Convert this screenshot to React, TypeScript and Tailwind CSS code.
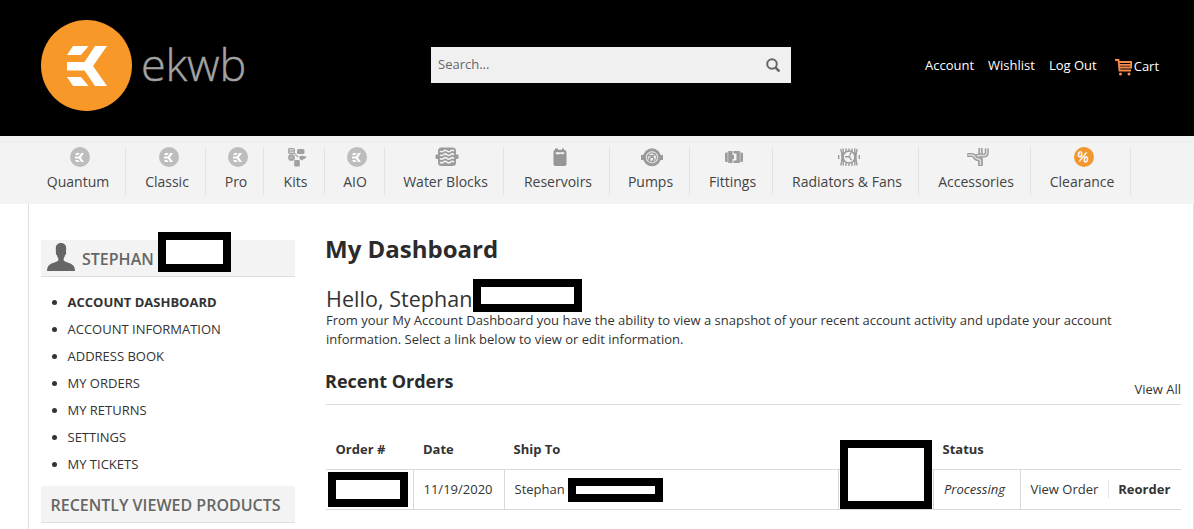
import type { ReactNode } from "react";

function EkMark({ className }: { className?: string }) {
  return (
    <svg viewBox="0 0 40 40" className={className} fill="currentColor">
      <path d="M6 0h15.500l-7.500 9H0z" />
      <path d="M28 0H40L26 20l14 20H28L17.500 24.500H0v-8.500h17.500z" />
      <path d="M0 31h14l7.500 9H6z" />
    </svg>
  );
}

function EkIcon() {
  return (
    <span className="flex size-5 items-center justify-center rounded-full bg-[#bdbdbd] text-white">
      <EkMark className="size-[9px]" />
    </span>
  );
}

function KitsIcon() {
  return (
    <svg viewBox="0 0 20 20" className="size-5" fill="#a0a0a0">
      <rect x="1.700" y="1.500" width="5.600" height="5" rx="1" fill="#d5d5d5" stroke="#a0a0a0" strokeWidth="1.200" />
      <path d="M2 4h5" stroke="#a0a0a0" />
      <rect x="10" y="2" width="7.500" height="5" rx="1.500" />
      <path d="M7 6l4 4" stroke="#b0b0b0" strokeWidth="1.500" />
      <circle cx="4.500" cy="10.500" r="2.600" fill="#b4b4b4" stroke="#a0a0a0" strokeWidth="1.500" />
      <path d="M12 9.500l3.500-1 1.500 1 2.500-.5-1 2.500-2 .5-1 1.500-2.500-1z" />
      <rect x="7.200" y="13" width="5.600" height="6.500" rx="1" />
    </svg>
  );
}

function BlockIcon() {
  return (
    <svg viewBox="0 0 24 20" className="h-5 w-6" fill="#9b9b9b">
      <rect x="0.500" y="7.500" width="23" height="4.500" rx="1" />
      <rect x="3" y="0.500" width="18" height="18.500" rx="3.500" />
      <g fill="none" stroke="#f3f3f3" strokeWidth="1.500">
        <path d="M5 4q1.750 1.600 3.500 0t3.500 0 3.500 0 3.500 0" />
        <path d="M5 7.700q1.750 1.600 3.500 0t3.500 0 3.500 0 3.500 0" />
        <path d="M5 11.400q1.750 1.600 3.500 0t3.500 0 3.500 0 3.500 0" />
        <path d="M5 15.100q1.750 1.600 3.500 0t3.500 0 3.500 0 3.500 0" />
      </g>
    </svg>
  );
}

function ReservoirIcon() {
  return (
    <svg viewBox="0 0 14 20" className="h-5 w-3.5" fill="#969696">
      <path d="M2 1.500h3v1.300h4V1.500h2v1.300q2.500.2 2.500 2.700v11.500q0 2-2 2h-9q-2 0-2-2V5q0-2 1.500-2.200z" />
      <path d="M2.500 5.200h9q0 2.500-2.500 2-2-.8-3.500.2-3 .6-3-2.200z" fill="#f3f3f3" />
    </svg>
  );
}

function PumpIcon() {
  return (
    <svg viewBox="0 0 22 20" className="h-5 w-[22px]">
      <path d="M0 8h3v5H0zM19 8h3v5h-3z" fill="#9b9b9b" />
      <circle cx="11" cy="10.300" r="7.500" fill="#f3f3f3" stroke="#9b9b9b" strokeWidth="3" />
      <circle cx="11" cy="10.300" r="4.500" fill="none" stroke="#9b9b9b" strokeWidth="1.200" />
      <path d="M6.500 8.500l5 .3 3.500-2M11.500 9l-3 2.500.7 3.500M11.500 9l1.500 3-2 3" fill="none" stroke="#9b9b9b" strokeWidth="1.400" />
    </svg>
  );
}

function FittingIcon() {
  return (
    <svg viewBox="0 0 18 20" className="h-5 w-[18px]" fill="#9b9b9b">
      <path d="M1 5.500h1.700v9.500H1l-1-1V6.500zM3.200 4h4.300v4H9v4H7.500v4H3.200zM8.500 4h6.300v12H8.500v-2.500h3v-7h-3zM15.300 5.500h1.700l1 1v7.500l-1 1h-1.700z" />
    </svg>
  );
}

function RadiatorIcon() {
  return (
    <svg viewBox="0 0 22 20" className="h-5 w-[22px]" fill="none" stroke="#9b9b9b" strokeWidth="1.400">
      <path d="M.7 8v4M2.800 2q2.500 8 0 16.500M5.200 1.500v17M8 1.500v4M11 1.500v3M14 1.500v4M8 15v4M11 16v3M14 15v4M16.800 1.500v17M19.200 2q-2.500 8 0 16.500M21.300 8v4" />
      <circle cx="11" cy="10" r="6" fill="#f3f3f3" strokeWidth="1.600" />
      <path d="M7 9.700h3M12 8l1-2.500M12 11.300l1.500 1.700" />
      <circle cx="11.300" cy="9.700" r=".6" />
    </svg>
  );
}

function TubesIcon() {
  return (
    <svg viewBox="0 0 22 20" className="h-5 w-[22px]" fill="none">
      <path d="M13.500 1v17.500" stroke="#9b9b9b" strokeWidth="4.400" />
      <path d="M13.500 1v17.500" stroke="#e0e0e0" strokeWidth="1.400" />
      <path d="M19.800 1.500v4q0 3-3 3h-4.500q-3 0-4.500 3" stroke="#9b9b9b" strokeWidth="4" />
      <path d="M19.800 1.500v4q0 3-3 3h-4.500q-3 0-4.500 3" stroke="#e0e0e0" strokeWidth="1.300" />
      <path d="M.3 8H4.500q2.500 0 3.500 2t3 2q2.500 0 2.500 2.700V19" stroke="#9b9b9b" strokeWidth="4.200" />
      <path d="M1.300 8H4.500q2.500 0 3.500 2t3 2q2.500 0 2.500 2.700V18" stroke="#e0e0e0" strokeWidth="1.400" />
    </svg>
  );
}

function SaleIcon() {
  return (
    <span className="flex size-5 items-center justify-center rounded-full bg-[#f0982f] text-sm leading-5 font-semibold text-white">
      <span className="rotate-[10deg]">%</span>
    </span>
  );
}

const navItems: { label: string; width: string; icon: ReactNode }[] = [
  { label: "Quantum", width: "w-[96px] pl-px", icon: <EkIcon /> },
  { label: "Classic", width: "w-[80px] pl-[3px]", icon: <EkIcon /> },
  { label: "Pro", width: "w-[58px] pl-[3px]", icon: <EkIcon /> },
  { label: "Kits", width: "w-[61px] pl-[3px]", icon: <KitsIcon /> },
  { label: "AIO", width: "w-[60px] pl-px", icon: <EkIcon /> },
  { label: "Water Blocks", width: "w-[119px] pl-[3px]", icon: <BlockIcon /> },
  { label: "Reservoirs", width: "w-[106px] pl-[3px]", icon: <ReservoirIcon /> },
  { label: "Pumps", width: "w-[80px] pl-[2px]", icon: <PumpIcon /> },
  { label: "Fittings", width: "w-[83px] pl-[3px]", icon: <FittingIcon /> },
  { label: "Radiators & Fans", width: "w-[146px] pl-[3px]", icon: <RadiatorIcon /> },
  { label: "Accessories", width: "w-[112px] pl-[3px]", icon: <TubesIcon /> },
  { label: "Clearance", width: "w-[100px] pl-[3px]", icon: <SaleIcon /> },
];

const accountLinks = [
  "Account Dashboard",
  "Account Information",
  "Address Book",
  "My Orders",
  "My Returns",
  "Settings",
  "My Tickets",
];

function Header() {
  return (
    <header className="flex h-[136px] bg-black pl-[41px]">
      <div className="mt-5 flex h-[91px] w-[390px] items-center">
        <div className="flex size-[91px] items-center justify-center rounded-full bg-[#f89828] text-white">
          <EkMark className="size-10" />
        </div>
        <span className="mb-[3px] ml-[9px] text-[45px] leading-[60px] font-light tracking-[-0.2px] text-[#a3a3a3] [-webkit-text-stroke:0.4px_#a3a3a3]">
          ekwb
        </span>
      </div>
      <div className="mt-[47px] flex h-9 w-[360px] items-center justify-between bg-[#f0f0f0] pr-[11px] pl-[7px]">
        <span className="text-[13px] text-[#666]">Search...</span>
        <svg viewBox="0 0 14 14" className="size-3.5" fill="none" stroke="#666" strokeWidth="2">
          <circle cx="6" cy="6" r="4.800" />
          <path d="M9.500 9.500l4 4" strokeWidth="2.500" />
        </svg>
      </div>
      <div className="mt-14 ml-[134px] flex h-5 items-center gap-3.5 text-[13px] whitespace-nowrap text-white">
        <a>Account</a>
        <a>Wishlist</a>
        <a>Log Out</a>
        <a className="ml-1 flex items-center pt-0.5">
          <svg viewBox="0 0 17 17" className="mr-0.5 size-[17px]" fill="none" stroke="#f58b4c" strokeWidth="1.800">
            <path d="M0 1h3.500l1 10.500h11.500M3.700 3h12.500v5.500H4.300M4 5.800h12" />
            <circle cx="5.500" cy="15" r="1.500" fill="#f58b4c" stroke="none" />
            <circle cx="14" cy="15" r="1.500" fill="#f58b4c" stroke="none" />
          </svg>
          Cart
        </a>
      </div>
    </header>
  );
}

function Nav() {
  return (
    <nav className="h-[68px] bg-[#f3f3f3]">
      <div className="h-[6px] border-b border-[#ededed]" />
      <ul className="flex pt-[5px] pl-[30px]">
        {navItems.map((item) => (
          <li
            key={item.label}
            className={`${item.width} flex h-12 shrink-0 flex-col items-center border-r border-[#e3e3e3]`}
          >
            <span className="ml-[3px] flex h-5 items-center">{item.icon}</span>
            <span className="mt-[5px] text-sm leading-5 whitespace-nowrap text-[#444]">{item.label}</span>
          </li>
        ))}
      </ul>
    </nav>
  );
}

function Sidebar() {
  return (
    <aside className="w-[254px] shrink-0 pt-9">
      <div className="relative flex h-[37px] items-center border-b border-[#dedede] bg-[#f3f3f3] pl-1.5">
        <svg viewBox="0 0 28 28" className="mb-0.5 size-7" fill="#666">
          <path d="M14 0c3.500 0 5.200 2.300 5.200 5.500 0 1.500 0 2.400-.3 3.300.6 1.300 0 3-.9 3.500-.2 1.300-.7 2.300-1.300 3v2.200c1.800 2 9.300 2.700 10.500 6.500.5 1.500.8 3 .8 4H0c0-1 .3-2.500.8-4 1.200-3.800 8.700-4.500 10.500-6.500v-2.200c-.7-.7-1.100-1.700-1.300-3-.9-.5-1.500-2.200-.9-3.500-.3-.9-.3-1.800-.3-3.300C8.800 2.300 10.500 0 14 0z" />
        </svg>
        <span className="mt-0.5 ml-[7px] text-base font-semibold text-[#666]">STEPHAN</span>
        <span className="absolute -top-2 left-[117px] h-10 w-[73px] border-8 border-black bg-white" />
      </div>
      <ul className="mt-3 list-disc pl-[26.500px] text-[13px] leading-[27px] text-[#333] uppercase">
        {accountLinks.map((link, index) => (
          <li key={link} className={index === 0 ? "font-bold" : ""}>
            {link}
          </li>
        ))}
      </ul>
      <div className="mt-2 flex h-[37px] items-center border-b border-[#dedede] bg-[#f3f3f3] pt-0.5 pl-[9.500px] text-base font-semibold whitespace-nowrap text-[#666]">
        RECENTLY VIEWED PRODUCTS
      </div>
    </aside>
  );
}

function OrdersTable() {
  return (
    <table className="mt-6 w-[855px] table-fixed border-separate border-spacing-0 text-left text-[13px] text-[#333]">
      <colgroup>
        <col className="w-[88px]" />
        <col className="w-[91px]" />
        <col className="w-[334px]" />
        <col className="w-[95px]" />
        <col className="w-[87px]" />
        <col className="w-[160px]" />
      </colgroup>
      <thead>
        <tr className="h-[41px] *:border-b *:border-[#d9d9d9] *:pt-0.5">
          <th className="pl-[9.500px]">Order #</th>
          <th className="pl-[9px]">Date</th>
          <th className="pl-[8.500px]">Ship To</th>
          <th />
          <th className="pl-[8.500px]">Status</th>
          <th />
        </tr>
      </thead>
      <tbody>
        <tr className="h-10 *:border-b *:border-[#d9d9d9]">
          <td className="border-r pl-0.5">
            <div className="h-[35px] w-20 border-8 border-black bg-white" />
          </td>
          <td className="border-r pl-[9.500px]">11/19/2020</td>
          <td className="border-r pl-[9.500px]">
            <div className="flex items-center">
              Stephan
              <span className="ml-[3px] h-6 w-[95px] border-8 border-black bg-white" />
            </div>
          </td>
          <td className="relative border-r">
            <span className="absolute -top-[30px] left-px h-[69px] w-[92px] border-8 border-black bg-white" />
          </td>
          <td className="border-r pl-2.5 italic">Processing</td>
          <td className="pl-[9.500px] whitespace-nowrap">
            View Order
            <span className="mr-[9px] ml-2.5 border-l border-[#e3e3e3]" />
            <b>Reorder</b>
          </td>
        </tr>
      </tbody>
    </table>
  );
}

export default function App() {
  return (
    <div className="h-[529px] w-[1194px] overflow-hidden bg-white font-['Open_Sans',sans-serif]">
      <Header />
      <Nav />
      <div className="ml-7 flex h-[325px] w-[1166px] border-x border-[#dedede] pl-3">
        <Sidebar />
        <main className="ml-[31px] w-[855px] shrink-0 pt-[29px] text-[#333]">
          <h1 className="-ml-px text-2xl font-bold text-[#2b2b2b]">My Dashboard</h1>
          <div className="relative mt-[17px] pt-0.5 text-[21.500px] leading-[30px] tracking-[0.04px]">
            Hello, Stephan
            <span className="absolute -top-[3px] left-[147px] h-[33px] w-[109px] border-8 border-black bg-white" />
          </div>
          <p className="-mt-[3px] text-[13px] leading-[19px]">
            From your My Account Dashboard you have the ability to view a snapshot of your recent account
            activity and update your account information. Select a link below to view or edit information.
          </p>
          <div className="mt-[19px] flex h-[37px] items-start justify-between border-b border-[#dedede]">
            <h2 className="-ml-px text-lg leading-[26px] font-bold text-[#2b2b2b]">Recent Orders</h2>
            <a className="mt-[11px] text-[13px] leading-5">View All</a>
          </div>
          <OrdersTable />
        </main>
      </div>
    </div>
  );
}
